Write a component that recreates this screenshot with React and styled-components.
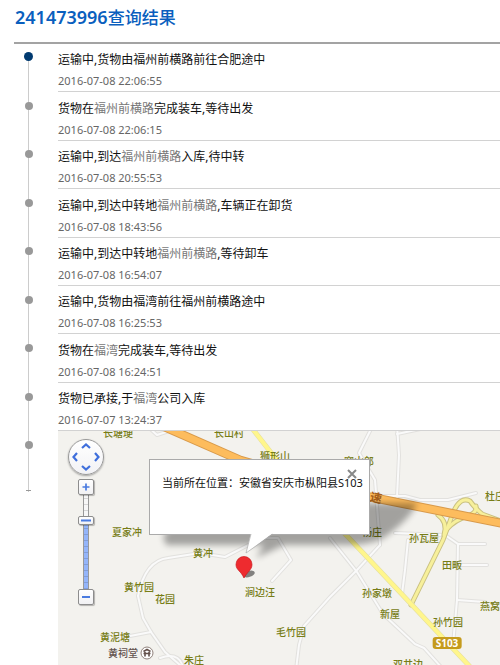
import React from "react";
import styled, { createGlobalStyle } from "styled-components";

const GlobalStyle = createGlobalStyle`
  * { box-sizing: border-box; }
  body {
    margin: 0;
    background: #fff;
    color: #111;
    font-family: "Noto Sans", "Noto Sans CJK SC", sans-serif;
    font-size: 12px;
  }
`;

const Page = styled.main`
  display: flex;
  flex-direction: column;
  min-height: 100vh;
  padding-left: 14px;
`;

const Title = styled.h1`
  margin: 0;
  padding: 5px 0 12px 1px;
  border-bottom: 2px solid #a3a3a3;
  color: #0a5fbe;
  font-family: "Noto Sans", "Noto Sans CJK SC", sans-serif;
  font-size: 17px;
  font-weight: 500;
  line-height: 24px;
`;

const TrackingNumber = styled.span`
  font-size: 18px;
  font-weight: 600;
`;

const Body = styled.div`
  display: grid;
  grid-template-columns: 44px minmax(0, 1fr);
  flex: 1;
`;

const Rail = styled.div`
  display: flex;
  flex-direction: column;
  align-self: start;
  width: 29px;
  min-height: 448px;
  border-bottom: 1px solid transparent;
  background:
    linear-gradient(#999, #999) center bottom / 5px 1px no-repeat,
    linear-gradient(#ccc, #ccc) center 12px / 1px 100% no-repeat;
`;

const Stops = styled.div`
  display: flex;
  flex-direction: column;
  min-height: 387px;
`;

const Stop = styled.div`
  display: flex;
  flex: 1;
  justify-content: center;
  padding-top: ${(p) => (p.$active ? 8 : 10)}px;
`;

const Dot = styled.span`
  width: ${(p) => (p.$active ? 9 : 8)}px;
  height: ${(p) => (p.$active ? 9 : 8)}px;
  border-radius: 50%;
  background: ${(p) => (p.$active ? "#003a70" : "#999")};
`;

const Content = styled.div`
  display: flex;
  flex-direction: column;
`;

const Events = styled.ol`
  display: flex;
  flex-direction: column;
  min-height: 387px;
  margin: 0;
  padding: 0;
  list-style: none;
`;

const EventRow = styled.li`
  display: flex;
  flex: 1;
  flex-direction: column;
  justify-content: flex-end;
  border-bottom: 1px solid #d2d2d2;
`;

const EventText = styled.p`
  margin: 0;
  line-height: 22px;
`;

const Place = styled.a`
  color: #777;
  text-decoration: none;
`;

const EventTime = styled.time`
  color: #666;
  font-size: 11px;
  line-height: 20px;
`;

const MapPane = styled.section`
  position: relative;
  flex: 1;
  min-height: 234px;
  overflow: hidden;
  background: #f3f2ee;
`;

const MapArt = styled.svg`
  position: absolute;
  inset: 0;
  width: 100%;
  height: 100%;
`;

const MapLabel = styled.span`
  position: absolute;
  left: ${(p) => p.$x - 58}px;
  top: ${(p) => p.$y - 431}px;
  transform: translate(-50%, -50%) rotate(${(p) => p.$turn || 0}deg);
  color: ${(p) => p.$color || "#777d16"};
  font-size: ${(p) => p.$size || 10}px;
  font-weight: ${(p) => p.$weight || 500};
  line-height: 12px;
  white-space: nowrap;
`;

const RoadBadge = styled(MapLabel)`
  padding: 0 3px;
  border-radius: 3px;
  background: #c59b1d;
`;

const Popup = styled.div`
  position: absolute;
  left: 91px;
  top: 28px;
  width: 221px;
  height: 76px;
  padding: 14px 0 0 12px;
  border: 1px solid #aaa;
  background: #fff;
  color: #111;
  font-size: 11px;
  line-height: 18px;
  white-space: nowrap;
`;

const CloseButton = styled.button`
  position: absolute;
  top: 9px;
  right: 12px;
  width: 10px;
  height: 10px;
  padding: 0;
  border: 0;
  background: none;
  svg { display: block; }
`;

const MapButton = styled.button`
  position: absolute;
  left: ${(p) => p.$x - 58}px;
  top: ${(p) => p.$y - 431}px;
  display: grid;
  place-items: center;
  width: 16px;
  height: ${(p) => p.$h || 16}px;
  padding: 0;
  border: 1px solid #8d8d8d;
  border-radius: 2px;
  background: linear-gradient(#fff, #f1f1f3);
  box-shadow: 1px 1px 1px #0004;
`;

const Compass = styled.div`
  position: absolute;
  left: 10px;
  top: 8px;
  display: grid;
  grid-template: repeat(3, 1fr) / repeat(3, 1fr);
  width: 36px;
  height: 36px;
  padding: 1px;
  border: 1px solid #999;
  border-radius: 50%;
  background: linear-gradient(#fff, #f2f2f5);
  box-shadow: 0 1px 2px #0005;
`;

const PanButton = styled.button`
  grid-area: ${(p) => p.$area};
  display: grid;
  place-items: center;
  padding: 0;
  border: 0;
  background: none;
  svg { transform: rotate(${(p) => p.$turn}deg); }
`;

const ZoomTrack = styled.div`
  position: absolute;
  left: 25px;
  top: 62px;
  width: 6px;
  height: 98px;
  border: 1px solid #999;
  border-width: 0 1px;
  background:
    repeating-linear-gradient(transparent 0 5px, #0002 5px 6px),
    linear-gradient(#f7f7f7 0 28px, #94b5fa 28px);
`;

const FUZHOU = "福州前横路";
const FUWAN = "福湾";

const events = [
  { parts: ["运输中,货物由福州前横路前往合肥途中"], time: "2016-07-08 22:06:55" },
  { parts: ["货物在", FUZHOU, "完成装车,等待出发"], time: "2016-07-08 22:06:15" },
  { parts: ["运输中,到达", FUZHOU, "入库,待中转"], time: "2016-07-08 20:55:53" },
  { parts: ["运输中,到达中转地", FUZHOU, ",车辆正在卸货"], time: "2016-07-08 18:43:56" },
  { parts: ["运输中,到达中转地", FUZHOU, ",等待卸车"], time: "2016-07-08 16:54:07" },
  { parts: ["运输中,货物由福湾前往福州前横路途中"], time: "2016-07-08 16:25:53" },
  { parts: ["货物在", FUWAN, "完成装车,等待出发"], time: "2016-07-08 16:24:51" },
  { parts: ["货物已承接,于", FUWAN, "公司入库"], time: "2016-07-07 13:24:37" },
];

const labels = [
  ["长塘埂", 118, 433], ["长山村", 229, 433], ["狮形山", 275, 456],
  ["窑山郎", 359, 461], ["杜庄", 495, 496], ["夏家冲", 127, 532],
  ["杨庄", 372, 532], ["孙瓦屋", 424, 538], ["黄冲", 203, 553],
  ["田畈", 452, 565], ["黄竹园", 139, 587], ["花园", 165, 599],
  ["涧边汪", 260, 592], ["孙家墩", 377, 593], ["新屋", 390, 614],
  ["孙竹园", 448, 622], ["毛竹园", 291, 632], ["燕窝", 490, 606],
  ["黄泥塘", 115, 637], ["朱庄", 194, 660], ["双井边", 408, 664],
];

const minorRoads = [
  "M146 425 L157 435 L172 430",
  "M373 425 L359 453 L375 480 L380 545",
  "M397 425 L399 455 L397 497",
  "M397 434 L430 427",
  "M369 496 L405 496 L420 500 L448 500 L476 493",
  "M138 596 C142 576 150 560 168 558 L200 553 L225 557 L262 538 L278 538 L291 560 L272 581",
  "M138 596 L143 618 L151 632 L165 652 L180 665",
  "M130 636 L151 632",
  "M160 658 C176 652 182 660 184 670",
  "M380 545 L357 570 L330 597 L304 626 L299 645 L296 670",
  "M330 538 L357 572 L383 614 L415 644 L424 648 L442 668",
  "M408 540 L405 570 L402 594",
  "M395 533 L445 535 L458 544 L457 600 L453 645",
  "M458 544 L485 544",
  "M458 565 L487 565",
  "M457 600 L485 602",
];

function MapDrawing() {
  return (
    <MapArt aria-hidden="true">
      <defs>
        <filter id="soft" x="-10%" y="-30%" width="120%" height="160%">
          <feGaussianBlur stdDeviation="3" />
        </filter>
      </defs>
      <g transform="translate(-58 -431)" fill="none" strokeLinejoin="round" strokeLinecap="round">
        {minorRoads.map((d) => <path key={d} d={d} stroke="#e2e1de" strokeWidth="4" />)}
        {minorRoads.map((d) => <path key={d} d={d} stroke="#fafafa" strokeWidth="2" />)}
        <g stroke="#c9c080" strokeWidth="5">
          <path d="M411 605 L443 540 L453 513 Q460 496 470 501 Q474 507 482 514 L506 523" />
          <path d="M444 535 Q448 522 438 515" />
          <path d="M446 530 Q454 520 470 515 Q477 512 476 506" />
        </g>
        <g stroke="#f7f09b" strokeWidth="3">
          <path d="M411 605 L443 540 L453 513 Q460 496 470 501 Q474 507 482 514 L506 523" />
          <path d="M444 535 Q448 522 438 515" />
          <path d="M446 530 Q454 520 470 515 Q477 512 476 506" />
        </g>
        <path d="M248 423 L300 490 L349 538 L412 605 L475 672" stroke="#e5df9e" strokeWidth="5" />
        <path d="M248 423 L300 490 L349 538 L412 605 L475 672" stroke="#fff68c" strokeWidth="4" />
        <path d="M158 424 L240 460 L370 497 L510 525" stroke="#d89a4b" strokeWidth="9" />
        <path d="M158 424 L240 460 L370 497 L510 525" stroke="#fdbc5d" strokeWidth="7" />
      </g>
    </MapArt>
  );
}

function PopupShadow() {
  return (
    <MapArt aria-hidden="true">
      <g transform="translate(-58 -431)">
        <path d="M163 536 L195 503 L417 503 Q412 517 385 537 Q374 544 350 545 L284 545 L256 558 L264 545 L166 545 Z" fill="#000" opacity=".33" filter="url(#soft)" />
      </g>
    </MapArt>
  );
}

function PopupPointer() {
  return (
    <MapArt aria-hidden="true" pointerEvents="none">
      <g transform="translate(-58 -431)">
        <path d="M251 533 L246 553 L273 533 Z" fill="#fff" />
        <path d="M251 534 L246 553 L273 534" fill="none" stroke="#aaa" strokeWidth=".7" />
        <ellipse cx="249" cy="574" rx="6" ry="3" fill="#0007" transform="rotate(-18 249 574)" />
        <path d="M244 578 C241 571 236 570 236 564.500 A8 8 0 0 1 252 564.500 C252 570 247 572 244 578 Z" fill="#ee2b2f" stroke="#c8181c" strokeWidth=".7" />
        <circle cx="147" cy="653" r="6" fill="#fff" stroke="#8f817b" />
        <path d="M143.500 651.500 L147 649.500 L150.500 651.500 M143.500 653.500 H150.500 M145 650.500 V656.500 M149 650.500 V656.500" fill="none" stroke="#63504a" strokeWidth="1.600" />
      </g>
    </MapArt>
  );
}

const directions = [
  ["上移", "1 / 2", 0], ["左移", "2 / 1", -90],
  ["右移", "2 / 3", 90], ["下移", "3 / 2", 180],
];

function MapControls() {
  return (
    <>
      <Compass>
        {directions.map(([name, area, turn]) => (
          <PanButton key={name} aria-label={name} $area={area} $turn={turn}>
            <svg width="10" height="6" viewBox="0 0 10 6">
              <path d="M1 5 L5 1.500 L9 5" fill="none" stroke="#3f6fdc" strokeWidth="2.200" />
            </svg>
          </PanButton>
        ))}
      </Compass>
      <ZoomTrack />
      <MapButton aria-label="放大" $x={78} $y={479}>
        <svg width="8" height="8" viewBox="0 0 8 8"><path d="M4 0.500V7.500M.5 4H7.500" stroke="#4a7be0" strokeWidth="1.700" /></svg>
      </MapButton>
      <MapButton aria-label="缩放级别" $x={78} $y={516} $h={9}>
        <svg width="10" height="3" viewBox="0 0 10 3"><path d="M0 1.500H10" stroke="#4a7be0" strokeWidth="2" /></svg>
      </MapButton>
      <MapButton aria-label="缩小" $x={78} $y={589}>
        <svg width="8" height="4" viewBox="0 0 8 4"><path d="M0 2H8" stroke="#4a7be0" strokeWidth="2" /></svg>
      </MapButton>
    </>
  );
}

export default function App() {
  return (
    <Page>
      <GlobalStyle />
      <Title><TrackingNumber>241473996</TrackingNumber>查询结果</Title>
      <Body>
        <Rail aria-hidden="true">
          <Stops>
            {events.map((e, i) => <Stop key={e.time} $active={i === 0}><Dot $active={i === 0} /></Stop>)}
          </Stops>
          <Stop><Dot /></Stop>
        </Rail>
        <Content>
          <Events>
            {events.map(({ parts: [before, place, after], time }) => (
              <EventRow key={time}>
                <EventText>{before}{place && <Place href="#map">{place}</Place>}{after}</EventText>
                <EventTime>{time}</EventTime>
              </EventRow>
            ))}
          </Events>
          <MapPane id="map" aria-label="地图">
            <MapDrawing />
            {labels.map(([text, x, y]) => <MapLabel key={text} $x={x} $y={y}>{text}</MapLabel>)}
            <MapLabel $x={123} $y={653} $color="#63534e">黄祠堂</MapLabel>
            <MapLabel $x={376} $y={498} $size={12} $weight={700} $turn={12} $color="#a5601c">速</MapLabel>
            <RoadBadge $x={447} $y={643} $color="#fff" $weight={700}>S103</RoadBadge>
            <PopupShadow />
            <Popup role="dialog" aria-label="当前所在位置">
              当前所在位置：安徽省安庆市枞阳县S103
              <CloseButton aria-label="关闭">
                <svg width="10" height="10" viewBox="0 0 10 10"><path d="M1 1 L9 9 M9 1 L1 9" stroke="#888" strokeWidth="2" /></svg>
              </CloseButton>
            </Popup>
            <PopupPointer />
            <MapControls />
          </MapPane>
        </Content>
      </Body>
    </Page>
  );
}
